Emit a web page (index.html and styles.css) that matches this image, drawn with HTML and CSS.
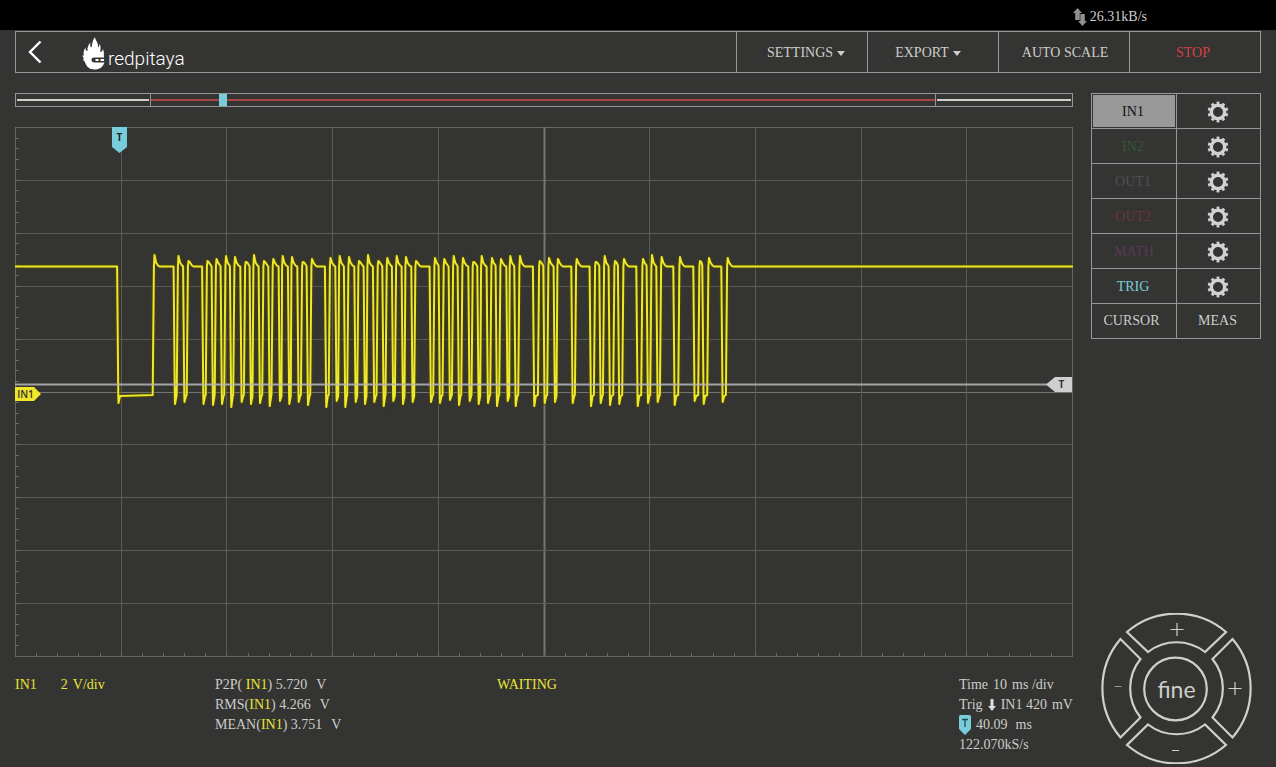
FILE: index.html
```html
<!DOCTYPE html>
<html lang="en">
<head>
<meta charset="utf-8">
<title>Oscilloscope</title>
<meta name="viewport" content="width=device-width, initial-scale=1">
<link rel="stylesheet" href="styles.css">
</head>
<body>
<svg class="defs" width="0" height="0" aria-hidden="true">
  <symbol id="gear" viewBox="0 0 22 22">
    <g fill="none" stroke="#d2d2d6">
      <circle cx="11" cy="11" r="6.700" stroke-width="3.400"/>
      <circle cx="11" cy="11" r="9.100" stroke-width="2.600" pathLength="100" stroke-dasharray="5 5" stroke-dashoffset="2.500" transform="rotate(-90 11 11)"/>
    </g>
  </symbol>
</svg>

<div class="status">
  <svg class="status-icon" viewBox="0 0 14 18" aria-hidden="true">
    <path fill="#8f8f8f" d="M4.500 0 9 5H6.800V12H2.200V5H0zM7.300 6H11.800V13H14L9.500 18 5 13H7.300z"/>
  </svg>
  <span>26.31kB/s</span>
</div>

<div class="page">
  <header class="toolbar">
    <a class="brand" href="#" aria-label="Back">
      <svg class="back" viewBox="0 0 14 24" aria-hidden="true"><path d="M12.500 1.500 2 12 12.500 22.500" fill="none" stroke="#fff" stroke-width="2.400"/></svg>
      <svg class="flame" viewBox="0 0 24 34" aria-hidden="true">
        <path fill="#fff" d="M13 0C13 3 16.500 5.500 16 9.500 16 11 17 10.500 17.500 7 19.500 10 18 13 18.500 15 19.800 15 20.500 14 21 12 22.500 15 21.500 18 22 20.500H12.500C10 20.500 9.500 21.500 9.500 23S10.500 25.500 12.500 25.500H22.500C21 30 17.500 32.500 12.500 32.500 7 32.500 4 29 3 25L1 22.500 1.800 21.500.3 18.500 2 18.500C.8 15 2.500 12.500 3.500 10.500 3.500 13 4 14 5.500 14 5 10.500 6.500 7.500 8.500 5.500 8 8.500 8 10 9.500 10.500 10.500 7 10 4 13 0z"/>
        <path fill="#fff" d="M13.500 22h3v2h-3zM18.500 22h3.500v2h-3.500z"/>
      </svg>
      <span class="brand-name">redpitaya</span>
    </a>
    <nav class="menu">
      <button class="menu-btn settings" type="button">SETTINGS<span class="caret"></span></button>
      <button class="menu-btn export" type="button">EXPORT<span class="caret"></span></button>
      <button class="menu-btn auto" type="button">AUTO SCALE</button>
      <button class="menu-btn stop" type="button">STOP</button>
    </nav>
  </header>

  <main class="workspace">
    <section class="scope">
      <div class="buffer">
        <div class="buffer-side"></div>
        <div class="buffer-window"></div>
        <div class="buffer-side"></div>
        <span class="buffer-marker"></span>
      </div>

      <svg class="graph" id="graph" viewBox="0 0 1058 530" role="img" aria-label="IN1 waveform">
        <g id="grid"></g>
        <path id="glow" fill="none" stroke="#4a4600" stroke-opacity=".5" stroke-width="5" stroke-linejoin="round"/>
        <path id="trace" fill="none" stroke="#efe72a" stroke-width="2" stroke-linejoin="round"/>
        <path stroke="#b9b9b7" stroke-width="2" stroke-opacity=".85" d="M0 257.500H1034"/>
        <path fill="#cfcfcf" d="M1031 257.500 1040 250H1057V265H1040z"/>
        <text class="tag" x="1046.500" y="261" fill="#333">T</text>
        <path fill="#78cddb" d="M97 0H112V20L104.500 26 97 20z"/>
        <text class="tag" x="104.500" y="14" fill="#222">T</text>
        <path fill="#f0e62a" d="M0 260H19L26 267 19 274H0z"/>
        <text class="tag channel" x="10.500" y="271" fill="#333">IN1</text>
      </svg>

      <div class="readout">
        <div class="scale"><span>IN1</span><span class="volts"><span>2</span><span>V/div</span></span></div>
        <div>
          <div class="line">P2P( <b>IN1</b>) 5.720<span class="unit">V</span></div>
          <div class="line">RMS(<b>IN1</b>) 4.266<span class="unit">V</span></div>
          <div class="line">MEAN(<b>IN1</b>) 3.751<span class="unit">V</span></div>
        </div>
        <div class="state">WAITING</div>
        <div class="timing">
          <div class="parts"><span>Time</span><span>10</span><span>ms /div</span></div>
          <div class="parts"><span>Trig</span><svg class="arrow" viewBox="0 0 8 12" aria-hidden="true"><path fill="#ddd" d="M2.500 0h3v7H8L4 12 0 7h2.500z"/></svg><span>IN1 420</span><span>mV</span></div>
          <div class="parts"><svg class="pin" viewBox="0 0 12 20" aria-hidden="true"><path fill="#78cddb" d="M0 1.500Q0 0 1.500 0h9Q12 0 12 1.500V14L6 20 0 14z"/><path stroke="#26484e" stroke-width="1.300" fill="none" d="M3 4.500h6M6 4.500v7.500"/></svg><span>40.09</span><span class="gap-left">ms</span></div>
          <div class="parts">122.070kS/s</div>
        </div>
      </div>
    </section>

    <aside class="side">
      <div class="channels">
        <button type="button" class="cell selected">IN1</button>
        <button type="button" class="cell" aria-label="IN1 settings"><svg class="gear"><use href="#gear"/></svg></button>
        <button type="button" class="cell in2">IN2</button>
        <button type="button" class="cell" aria-label="IN2 settings"><svg class="gear"><use href="#gear"/></svg></button>
        <button type="button" class="cell out1">OUT1</button>
        <button type="button" class="cell" aria-label="OUT1 settings"><svg class="gear"><use href="#gear"/></svg></button>
        <button type="button" class="cell out2">OUT2</button>
        <button type="button" class="cell" aria-label="OUT2 settings"><svg class="gear"><use href="#gear"/></svg></button>
        <button type="button" class="cell math">MATH</button>
        <button type="button" class="cell" aria-label="MATH settings"><svg class="gear"><use href="#gear"/></svg></button>
        <button type="button" class="cell trig">TRIG</button>
        <button type="button" class="cell" aria-label="TRIG settings"><svg class="gear"><use href="#gear"/></svg></button>
        <button type="button" class="cell cursor">CURSOR</button>
        <button type="button" class="cell meas">MEAS</button>
      </div>

      <div class="joystick">
        <svg class="joystick-art" viewBox="0 0 151 151" aria-hidden="true">
          <g fill="none" stroke="#cfcfcd" stroke-width="2.200">
            <path d="M26 19A76 76 0 0 1 125 19L104 39A46.500 46.500 0 0 0 47 39z"/>
            <path d="M26 132A76 76 0 0 0 125 132L104 111.500A46.500 46.500 0 0 1 47 111.500z"/>
            <path d="M19.500 26A76 76 0 0 0 19.500 124.500L39.500 104.500A46.500 46.500 0 0 1 39.500 46z"/>
            <path d="M131.500 26A76 76 0 0 1 131.500 124.500L111.500 104.500A46.500 46.500 0 0 0 111.500 46z"/>
            <circle cx="74.500" cy="76" r="31.300"/>
          </g>
          <path stroke="#cfcfcd" stroke-width="1.200" d="M69.500 16.500h13M76 10v13M127.500 75.500h13M134 69v13M71 137.500h7"/>
          <path stroke="#989896" stroke-width="1" d="M13.500 73.500h7"/>
        </svg>
        <button type="button" class="up" aria-label="Increase vertical"></button>
        <button type="button" class="left" aria-label="Decrease horizontal"></button>
        <button type="button" class="fine">fine</button>
        <button type="button" class="right" aria-label="Increase horizontal"></button>
        <button type="button" class="down" aria-label="Decrease vertical"></button>
      </div>
    </aside>
  </main>
</div>
<script src="scope.js"></script>
</body>
</html>
```

FILE: styles.css
```css
* {
  box-sizing: border-box;
}

body {
  margin: 0;
  background: #343432;
  color: #cdcdcb;
  font: 14px/20px "Liberation Serif", "Times New Roman", serif;
}

button {
  margin: 0;
  padding: 0;
  border: 0;
  background: none;
  color: inherit;
  font: inherit;
  cursor: pointer;
}

.defs {
  position: absolute;
}

.status {
  display: flex;
  justify-content: flex-end;
  align-items: center;
  gap: 3px;
  height: 30px;
  padding: 3px 129px 0 0;
  background: #000;
}

.status-icon {
  width: 14px;
  height: 18px;
}

.page {
  padding: 1px 15px 3px;
}

.toolbar {
  display: flex;
  justify-content: space-between;
  height: 42px;
  border: 1px solid #979797;
}

.brand {
  display: flex;
  align-items: center;
  padding-left: 12px;
  color: #fff;
  text-decoration: none;
}

.back {
  width: 14px;
  height: 24px;
  margin-right: 40px;
}

.flame {
  width: 24px;
  height: 34px;
  margin-top: 3px;
}

.brand-name {
  margin: 14px 0 0 2px;
  font: 300 19px/24px Roboto, sans-serif;
}

.menu {
  display: flex;
}

.menu-btn {
  display: flex;
  align-items: center;
  justify-content: center;
  width: 131px;
  padding-top: 2px;
  border-left: 1px solid #979797;
}

.settings {
  padding-left: 8px;
}

.export {
  padding-right: 10px;
}

.auto {
  padding-left: 2px;
}

.stop {
  padding-right: 4px;
  color: #d94141;
}

.caret {
  margin: 1px 0 0 4px;
  border: 4px solid transparent;
  border-top: 5px solid #cdcdcb;
  border-bottom: 0;
}

.workspace {
  display: grid;
  grid-template-columns: 1fr 170px;
  gap: 18px;
  padding-top: 20px;
}

.buffer {
  position: relative;
  display: grid;
  grid-template-columns: 134fr 786fr 136fr;
  height: 14px;
  border: 1px solid #979797;
}

.buffer-side,
.buffer-window {
  display: flex;
  align-items: center;
}

.buffer-side {
  padding: 0 1px;
}

.buffer-side::before,
.buffer-window::before {
  content: "";
  flex: 1;
  height: 2px;
  background: #d0cdcd;
}

.buffer-window {
  border: solid #979797;
  border-width: 0 1px;
}

.buffer-window::before {
  background: #a84444;
}

.buffer-marker {
  position: absolute;
  top: 0;
  bottom: 0;
  left: 19.2%;
  width: 8px;
  background: #78cddb;
}

.graph {
  display: block;
  width: 100%;
  margin-top: 20px;
}

.tag {
  font: bold 10px "Open Sans", sans-serif;
  text-anchor: middle;
}

.channel {
  font-weight: 600;
}

.readout {
  display: grid;
  grid-template-columns: 200fr 282fr 462fr 114fr;
  padding: 18px 0 9px;
}

.scale {
  display: flex;
  gap: 24px;
}

.scale,
.state,
.line b {
  color: #ebe637;
  font-weight: normal;
}

.volts {
  display: flex;
  gap: 5px;
}

.line,
.parts {
  white-space: nowrap;
}

.unit {
  margin-left: 9px;
}

.parts {
  display: flex;
  align-items: center;
  gap: 5px;
  height: 20px;
}

.arrow {
  width: 8px;
  height: 12px;
}

.pin {
  width: 12px;
  height: 20px;
}

.gap-left {
  margin-left: 3px;
}

.side {
  display: flex;
  flex-direction: column;
  justify-content: space-between;
}

.channels {
  display: grid;
  grid-template-columns: 84px 1fr;
  grid-auto-rows: 34px;
  gap: 1px;
  padding: 1px;
  background: #979797;
}

.cell {
  display: flex;
  align-items: center;
  justify-content: center;
  padding: 2px 2px 0 0;
  background: #343432;
}

.selected {
  background: #999;
  color: #111;
  box-shadow: inset 0 0 0 1px #343432;
}

.in2 {
  color: #33573a;
}

.out1 {
  color: #4e4e59;
}

.out2 {
  color: #6b3439;
}

.math {
  padding-right: 0;
  color: #573a56;
}

.trig {
  color: #78cddb;
}

.cursor {
  padding: 0 5px 0 0;
}

.meas {
  padding-top: 0;
}

.gear {
  width: 22px;
  height: 22px;
}

.joystick {
  display: grid;
  grid-template: 43px 1fr 43px / 43px 1fr 43px;
  width: 151px;
  height: 151px;
  margin-left: 10px;
}

.joystick-art {
  grid-area: 1 / 1 / -1 / -1;
  width: 100%;
  height: 100%;
}

.up {
  grid-area: 1 / 2;
}

.left {
  grid-area: 2 / 1;
}

.fine {
  grid-area: 2 / 2;
  font: 23px/28px Lato, sans-serif;
}

.right {
  grid-area: 2 / 3;
}

.down {
  grid-area: 3 / 2;
}
```

FILE: scope.js
```js
const WIDTH = 1057;
const HEIGHT = 529;
const HIGH = 139.5;
const LOW = 268;

// Low pulses: undershoot x, y, then overshoot x, y.
const pulses = [
  [103.5, 276, 139.5, 128], [160, 277, 163.5, 129], [169.5, 275, 173.5, 134],
  [188.5, 277, 192.5, 134], [198, 278, 201.5, 132], [207, 277, 211, 129],
  [216.3, 280, 220, 130], [226.7, 275, 230.7, 135], [236, 277, 239, 128],
  [245, 276, 249, 134], [254.7, 279, 258.3, 132], [265, 274, 267.7, 129],
  [274.3, 277, 277, 130], [283.7, 275, 287.7, 135], [293, 278, 297, 132],
  [311.3, 280, 315.5, 131], [321.7, 274, 324.7, 129], [330.3, 280, 334, 130],
  [340.7, 275, 344, 134], [350, 277, 353, 128], [359.3, 275, 363.3, 134],
  [368.7, 279, 372.3, 131], [378.3, 274, 381.7, 129], [388, 277, 391, 130],
  [397.7, 275, 401, 134], [416, 275, 420, 131], [425, 276, 429.3, 132],
  [435, 273, 438.7, 129], [444, 278, 448, 131], [454.7, 274, 458.3, 135],
  [463.7, 277, 466.7, 129], [473, 276, 477, 131], [482, 279, 486, 132],
  [492.7, 274, 495.3, 129], [500.7, 279, 505, 129], [519.3, 279, 524.7, 134],
  [529.7, 276, 534, 131], [540, 275, 543, 132], [557.7, 276, 561.7, 132],
  [576, 279, 580.7, 135], [585.7, 276, 589.7, 129], [595, 278, 600, 134],
  [604.3, 277, 609, 132], [622.7, 279, 628, 132], [633, 276, 637, 128],
  [642.7, 275, 646.7, 130], [659.7, 278, 665, 130], [679.7, 274, 685, 134],
  [688.7, 277, 694, 131], [707.7, 275, 712.7, 131]
];

const points = [[0, HIGH]];
for (const [mx, my, px, py] of pulses) {
  const base = Math.max(mx + 1.5, px - 1.8);
  points.push([mx - 1.4, HIGH], [mx - 0.2, LOW], [mx, my], [mx + 1.5, LOW + 1], [base, LOW]);
  points.push([px - 0.6, HIGH], [px, py], [px + 1.5, HIGH - 4], [px + 3.5, HIGH - 1], [px + 5, HIGH]);
}
// A sample never runs back past the next falling edge.
for (let i = points.length - 2; i >= 0; i--) {
  points[i][0] = Math.min(points[i][0], points[i + 1][0]);
}
points.push([WIDTH + 1, HIGH]);
const path = "M" + points.map(p => p.join(" ")).join("L");
document.getElementById("trace").setAttribute("d", path);
document.getElementById("glow").setAttribute("d", path);

const line = (d, color, width = 1) => `<path d="${d}" stroke="${color}" stroke-width="${width}"/>`;
let grid = `<rect x="0.5" y="0.5" width="${WIDTH}" height="${HEIGHT}" fill="none" stroke="#666664"/>`;
for (let i = 1; i < 10; i++) {
  const x = Math.round(i * WIDTH / 10) + 0.5;
  const y = Math.round(i * HEIGHT / 10) + 0.5;
  grid += line(`M${x} 0V${HEIGHT}`, i === 5 ? "#757573" : "#5a5a58", i === 5 ? 2 : 1);
  grid += line(`M0 ${y}H${WIDTH}`, i === 5 ? "#757573" : "#5a5a58");
}
for (let i = 1; i < 50; i++) {
  const x = Math.round(i * WIDTH / 50) + 0.5;
  const y = Math.round(i * HEIGHT / 50) + 0.5;
  grid += line(`M${x} ${HEIGHT}v-3`, "#6a6a68") + line(`M0 ${y}h4`, "#6a6a68");
}
document.getElementById("grid").innerHTML = grid;
```
